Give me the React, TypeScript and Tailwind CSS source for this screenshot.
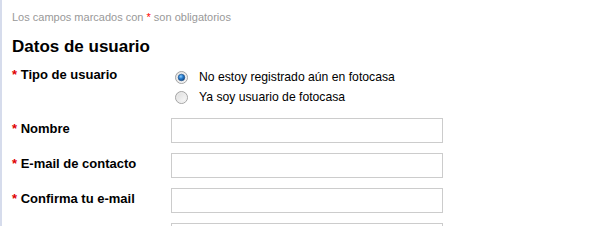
import React from "react";

function Radio({ checked }: { checked?: boolean }) {
  return (
    <svg width="13" height="13" viewBox="0 0 13 13" className="shrink-0">
      <defs>
        <linearGradient id={checked ? "rg1" : "rg2"} x1="0" y1="0" x2="1" y2="1">
          <stop offset="0" stopColor="#d8d8d8" />
          <stop offset="1" stopColor="#ffffff" />
        </linearGradient>
        <radialGradient id="dot" cx="0.4" cy="0.35" r="0.7">
          <stop offset="0" stopColor="#8fd0ff" />
          <stop offset="0.45" stopColor="#2a7fd0" />
          <stop offset="1" stopColor="#0d3f7a" />
        </radialGradient>
      </defs>
      <circle cx="6.5" cy="6.5" r="6" fill={`url(#${checked ? "rg1" : "rg2"})`} stroke="#a4a4a4" strokeWidth="1" />
      <circle cx="6.5" cy="6.5" r="4.6" fill="none" stroke="#ececec" strokeWidth="1" />
      {checked && <circle cx="6.5" cy="6.5" r="3.3" fill="url(#dot)" stroke="#1d4f86" strokeWidth="0.6" />}
    </svg>
  );
}

function Label({ text }: { text: string }) {
  return (
    <div className="w-[159px] shrink-0 text-[13px] leading-[16px] font-bold text-black">
      <span className="text-[#e00000]">*</span> {text}
    </div>
  );
}

function InputRow({ label }: { label?: string }) {
  return (
    <div className="flex">
      <div className="w-[159px] shrink-0 pt-[3px]">{label && <Label text={label} />}</div>
      <div className="w-[272px] h-[25px] border border-[#cccccc] bg-white" />
    </div>
  );
}

export default function App() {
  return (
    <div
      className="w-[596px] h-[226px] overflow-hidden bg-white border-l-2 border-[#d6dcec] pl-[10px]"
      style={{ fontFamily: '"Liberation Sans", Arial, sans-serif' }}
    >
      <div className="pt-[10px] text-[11px] leading-[14px] text-[#999999]">
        Los campos marcados con <span className="text-[#ff0000]">*</span> son obligatorios
      </div>
      <h2 className="mt-[13px] text-[17px] leading-[20px] font-bold text-black">Datos de usuario</h2>
      <div className="mt-[10px] flex flex-col">
        <div className="flex">
          <Label text="Tipo de usuario" />
          <div className="flex flex-col text-[12.2px] leading-[20px] text-black">
            <div className="flex items-center">
              <span className="ml-[4px] flex"><Radio checked /></span>
              <span className="ml-[11px]">No estoy registrado aún en fotocasa</span>
            </div>
            <div className="flex items-center">
              <span className="ml-[4px] flex"><Radio /></span>
              <span className="ml-[11px]">Ya soy usuario de fotocasa</span>
            </div>
          </div>
        </div>
        <div className="mt-[11px] flex flex-col gap-[10px]">
          <InputRow label="Nombre" />
          <InputRow label="E-mail de contacto" />
          <InputRow label="Confirma tu e-mail" />
          <InputRow />
        </div>
      </div>
    </div>
  );
}
